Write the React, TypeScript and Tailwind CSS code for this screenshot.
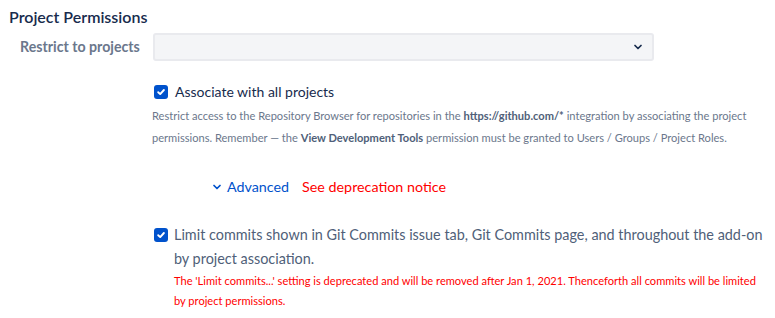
import { ChevronDown } from 'lucide-react';

function Check() {
  return (
    <span className="flex h-[14px] w-[14px] shrink-0 items-center justify-center rounded-[3px] bg-[#0052cc]">
      <svg width="10" height="10" viewBox="0 0 10 10" fill="none">
        <path d="M2.2 5.2 4.2 7.1 7.9 3" stroke="white" strokeWidth="1.9" strokeLinecap="round" strokeLinejoin="round" />
      </svg>
    </span>
  );
}

export default function App() {
  return (
    <div className="h-[318px] w-[775px] overflow-hidden bg-white font-['Lato','Noto_Sans',sans-serif] text-[#172b4d]">
      <h2 className="pl-[9px] pt-[7px] text-[16px] font-semibold leading-[20px]">Project Permissions</h2>

      <div className="mt-[6px] flex items-center">
        <label className="w-[139px] shrink-0 whitespace-nowrap pl-[20px] text-[14.2px] font-bold text-[#6b778c]">Restrict to projects</label>
        <div className="ml-[14px] flex h-[28px] w-[501px] items-center justify-end rounded-[3px] border-2 border-[#e9eaee] bg-[#f4f5f7] pr-[8px]">
          <ChevronDown size={12} strokeWidth={3.5} className="text-[#172b4d]" />
        </div>
      </div>

      <div className="ml-[152px] mt-[21px]">
        <div className="flex items-center gap-[7px] pl-[2px]">
          <Check />
          <span className="text-[14px] leading-[20px]">Associate with all projects</span>
        </div>
        <p className="mt-[3px] whitespace-nowrap text-[11.1px] leading-[22px] text-[#6b778c]">
          Restrict access to the Repository Browser for repositories in the <b className="text-[#505f79]">https://github.com/*</b> integration by associating the project
          <br />
          permissions. Remember — the <b className="text-[#505f79]">View Development Tools</b> permission must be granted to Users / Groups / Project Roles.
        </p>

        <div className="ml-[59px] mt-[28px] flex items-center text-[14.3px] leading-[20px]">
          <ChevronDown size={12} strokeWidth={3.5} className="text-[#0052cc]" />
          <span className="ml-[4px] text-[#0052cc]">Advanced</span>
          <span className="ml-[13px] text-[#ff0000]">See deprecation notice</span>
        </div>

        <div className="mt-[26px] flex items-start gap-[6px] pl-[2px]">
          <div className="pt-[5px]">
            <Check />
          </div>
          <div>
            <p className="whitespace-nowrap text-[14.4px] leading-[24px] text-[#505f79]">
              Limit commits shown in Git Commits issue tab, Git Commits page, and throughout the add-on
              <br />
              by project association.
            </p>
            <p className="whitespace-nowrap text-[11.1px] leading-[20px] text-[#ff0000]">
              The 'Limit commits...' setting is deprecated and will be removed after Jan 1, 2021. Thenceforth all commits will be limited
              <br />
              by project permissions.
            </p>
          </div>
        </div>
      </div>
    </div>
  );
}
